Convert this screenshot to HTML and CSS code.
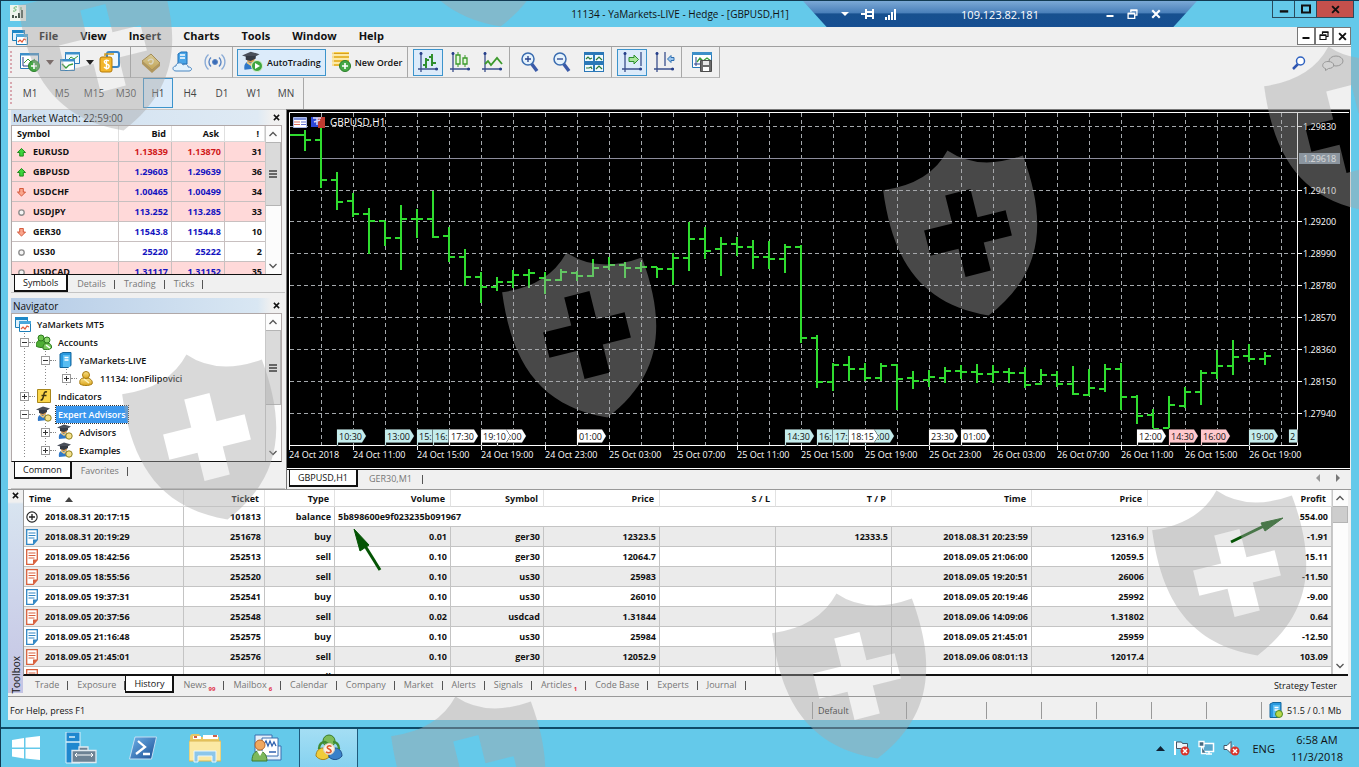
FILE: index.html
```html
<!DOCTYPE html>
<html lang="en">
<head>
  <meta charset="UTF-8">
  <title>11134 - YaMarkets-LIVE - Hedge - [GBPUSD,H1]</title>
  <link rel="stylesheet" href="styles.css">
</head>
<body>

  <!-- shared icons -->
  <svg class="defs" aria-hidden="true">
    <defs>
      <linearGradient id="gold" x1="0" y1="0" x2="0" y2="1"><stop offset="0" stop-color="#fbe38a"/><stop offset="1" stop-color="#d9a31a"/></linearGradient>
      <linearGradient id="ps" x1="0" y1="0" x2="1" y2="1"><stop offset="0" stop-color="#6fb2ea"/><stop offset="1" stop-color="#1a4f94"/></linearGradient>
    </defs>
    <symbol id="i-app" viewBox="0 0 16 16">
      <path d="M.5 1.500h12v10H.5z" fill="#dff1fb" stroke="#1e7fb8"/><path d="M0 1h13v3H0z" fill="#1e88c8"/>
      <path d="M4.500 5.500h11v10h-11z" fill="#fff" stroke="#1e7fb8"/><path d="M4 5h12v3H4z" fill="#4ba7dc"/>
      <path d="M6 13l2-2 2 2 2-3 2 1" fill="none" stroke="#e05a3a" stroke-width="1.200"/>
    </symbol>
    <symbol id="i-expert" viewBox="0 0 16 16">
      <path d="M2 15c-1-5 2-7 5-7s5 2 5 6z" fill="#2f78c8"/><circle cx="7" cy="6" r="3.200" fill="#d99a4e"/>
      <path d="M0 3.500L7 .5l7 2-6 3.500z" fill="#4a4f5a"/><path d="M3 4v3l4 1 4-2V4z" fill="#353a44"/>
      <path d="M4 9l3 2 2-2" fill="none" stroke="#f0c878" stroke-width="1.500"/>
      <circle cx="12" cy="12" r="3.200" fill="#f4e08a" stroke="#8f8020"/>
    </symbol>
    <symbol id="i-account" viewBox="0 0 16 16">
      <path d="M2 14c-1-4 1-6 4-6l4 0c3 1 5 3 4 6-3 2-9 2-12 0z" fill="url(#gold)" stroke="#a67a10"/>
      <circle cx="8" cy="5" r="3.500" fill="url(#gold)" stroke="#a67a10"/><path d="M6 9l5 4" stroke="#fff3b8" stroke-width="1.500"/>
    </symbol>
    <symbol id="i-people" viewBox="0 0 16 16">
      <path d="M0 12c0-4 2-6 5-6s5 3 5 6c-3 2-7 2-10 0z" fill="#4fae35" stroke="#2c7a1c"/><circle cx="5" cy="4" r="3" fill="#6cc44c" stroke="#2c7a1c"/>
      <path d="M7 15c0-4 1-6 4-6s5 2 4.500 5c-2 2-6 2-8.500 1z" fill="#79c95c" stroke="#2c7a1c"/><circle cx="11" cy="6" r="3" fill="#8bd66c" stroke="#2c7a1c"/>
      <path d="M10 11l4 3" stroke="#fff" stroke-width="1.500"/>
    </symbol>
    <symbol id="i-server" viewBox="0 0 16 16">
      <path d="M3 2l3-1.500h8v13l-3 2H3z" fill="#2a9ae0" stroke="#14679c"/><path d="M6 3h7v12H6z" fill="#58bdf2"/>
      <path d="M7.500 5.500h4M7.500 8h4" stroke="#fff" stroke-width="1.500"/>
    </symbol>
    <symbol id="i-indicator" viewBox="0 0 16 16">
      <path d="M1.500 1.500h13v13h-13z" fill="#fbd64a" stroke="#a8861a"/>
      <path d="M11 4c-3-1-3 2-3.500 4S7 12.500 4.500 12M5.500 7.500h5" fill="none" stroke="#3f3410" stroke-width="1.400"/>
    </symbol>
    <symbol id="i-up" viewBox="0 0 10 10"><path d="M5 .5l4.500 4.500H7v4H3V5H.5z" fill="#3dd43d" stroke="#148514"/></symbol>
    <symbol id="i-down" viewBox="0 0 10 10"><path d="M5 9L.5 4.500H3v-4h4v4h2.500z" fill="#f9a58c" stroke="#d0492a"/></symbol>
    <symbol id="i-flat" viewBox="0 0 10 10"><circle cx="5" cy="5" r="3" fill="#f4f4f4" stroke="#8c8c8c" stroke-width="1.500"/></symbol>
    <symbol id="i-note" viewBox="0 0 12 16">
      <path d="M.7 .7h10.600v10l-4 4.600H.7z" fill="#fff" stroke="currentColor" stroke-width="1.300"/>
      <path d="M2.500 4h7M2.500 6.500h7M2.500 9h6" stroke="currentColor"/><path d="M11 10.500L7 15v-4.500z" fill="currentColor"/>
    </symbol>
    <symbol id="i-plus" viewBox="0 0 14 14"><circle cx="7" cy="7" r="6" fill="#fff" stroke="#222" stroke-width="1.300"/><path d="M7 3.500v7M3.500 7h7" stroke="#222" stroke-width="1.500"/></symbol>
    <symbol id="i-chev-up" viewBox="0 0 10 8"><path d="M1.500 6L5 2.500 8.500 6" fill="none" stroke="#555" stroke-width="1.300"/></symbol>
    <symbol id="i-chev-down" viewBox="0 0 10 8"><path d="M1.500 2L5 5.500 8.500 2" fill="none" stroke="#555" stroke-width="1.300"/></symbol>
    <symbol id="i-close" viewBox="0 0 8 8"><path d="M1 1l6 6M7 1L1 7" stroke="currentColor" stroke-width="1.700"/></symbol>
    <symbol id="i-min" viewBox="0 0 10 8"><path d="M1.500 6h7" stroke="currentColor" stroke-width="2"/></symbol>
    <symbol id="i-restore" viewBox="0 0 10 10"><path d="M3.500 3V1h5.500v4.500H7.500M1 4h6v4.500H1z" fill="none" stroke="currentColor" stroke-width="1.200"/><path d="M1 4.300h6M3.300 1.300h6" stroke="currentColor" stroke-width="1.600"/></symbol>
    <symbol id="i-axes" viewBox="0 0 22 22"><path d="M4 1v20M1 18h20" stroke="#3a4f8c" stroke-width="1.300"/><circle cx="4" cy="2.500" r="1.500" fill="#27408b"/><circle cx="19.500" cy="18" r="1.500" fill="#27408b"/></symbol>
  </svg>

  <header class="titlebar">
    <svg class="title-icon" viewBox="0 0 16 16"><path d="M0 0h16v16H0z" fill="#eef5ee"/><path d="M3 13v-3M6 13v-2M9 13V8M12 13V5" stroke="#4a5a50" stroke-width="2"/><path d="M7 2c-3-1-4 2-2 2s1 3-2 2M11 2v3" fill="none" stroke="#5fae6a"/></svg>
    <h1 class="title-text">11134 - YaMarkets-LIVE - Hedge - [GBPUSD,H1]</h1>
    <div class="window-buttons">
      <button aria-label="Minimize"><svg width="12" height="10"><use href="#i-min"/></svg></button>
      <button aria-label="Maximize"><svg width="12" height="10"><path d="M2 1.500h8v7H2z" fill="none" stroke="#111" stroke-width="2"/></svg></button>
      <button class="close" aria-label="Close"><svg width="9" height="9"><use href="#i-close"/></svg></button>
    </div>
    <div class="remote-bar">
      <button aria-label="Options"><svg width="10" height="8"><path d="M1 2h8L5 6z" fill="#fff"/></svg></button>
      <button aria-label="Pin"><svg width="14" height="12"><path d="M0 6h5M5 1v10M5 4h6M5 8h6M12 1v10" stroke="#fff" stroke-width="2" fill="none"/></svg></button>
      <button aria-label="Connection"><svg width="14" height="14"><path d="M2 13v-3M5 13V8M8 13V5M11 13V2" stroke="#fff" stroke-width="2"/></svg></button>
      <span class="remote-host">109.123.82.181</span>
      <button aria-label="Minimize session"><svg width="10" height="8"><use href="#i-min"/></svg></button>
      <button aria-label="Restore session"><svg width="11" height="11"><use href="#i-restore"/></svg></button>
      <button aria-label="Close session"><svg width="10" height="10"><use href="#i-close"/></svg></button>
    </div>
  </header>

  <main class="window">
    <nav class="menu">
      <svg class="menu-icon" width="16" height="16"><use href="#i-app"/></svg>
      <button>File</button><button>View</button><button>Insert</button><button>Charts</button><button>Tools</button><button>Window</button><button>Help</button>
      <div class="mdi-buttons">
        <button aria-label="Minimize chart"><svg width="10" height="10"><use href="#i-min"/></svg></button>
        <button aria-label="Restore chart"><svg width="10" height="10"><use href="#i-restore"/></svg></button>
        <button aria-label="Close chart"><svg width="9" height="9"><use href="#i-close"/></svg></button>
      </div>
    </nav>

    <div class="toolbar">
      <div class="group first">
        <span class="grip"></span>
        <button class="tool" aria-label="New chart"><svg width="22" height="22"><path d="M1.500 2.500h18v15h-18z" fill="#fff" stroke="#2879b8"/><path d="M1 2h19v2.500H1z" fill="#3d8fc9"/><path d="M4 6v9h12" fill="none" stroke="#27408b"/><path d="M5 12l4-4 3 3 4-3" fill="none" stroke="#3a9b3a"/><circle cx="15" cy="15" r="5.500" fill="#45a845" stroke="#2a7f2a"/><path d="M15 12v6M12 15h6" stroke="#fff" stroke-width="1.600"/></svg></button>
        <button class="drop" aria-label="Chart list"><svg width="8" height="5"><path d="M0 0h8L4 5z" fill="#5a4440"/></svg></button>
        <button class="tool" aria-label="Profiles"><svg width="22" height="22"><path d="M6.500 1.500h14v11h-14z" fill="#eef8fd" stroke="#2879b8"/><path d="M6 1h15v2.500H6z" fill="#3d8fc9"/><path d="M8 10l4-4 3 2 4-3" fill="none" stroke="#3a9b3a"/><path d="M1.500 8.500h14v11h-14z" fill="#fff" stroke="#2879b8"/><path d="M1 8h15v2.500H1z" fill="#3d8fc9"/><path d="M3 13l4 4 3-3 4-1" fill="none" stroke="#3a9b3a" stroke-width="1.300"/></svg></button>
        <button class="drop" aria-label="Profile list"><svg width="8" height="5"><path d="M0 0h8L4 5z" fill="#222"/></svg></button>
        <button class="tool" aria-label="Symbols"><svg width="22" height="22"><rect x="8" y="1" width="12" height="15" rx="2" fill="#eef8ff" stroke="#3a86c8" stroke-width="2"/><rect x="1" y="6" width="12" height="15" rx="2" fill="#f3b62c" stroke="#b57a08"/><path d="M6 5V3h9" fill="none" stroke="#d09a20" stroke-width="1.500"/><path d="M10 10c-3-2-6 0-4 2s5 1 4 4-4 1-5 0M7.500 8.500v10" fill="none" stroke="#fff" stroke-width="1.400"/></svg></button>
      </div>
      <div class="group">
        <button class="tool" aria-label="Market"><svg width="22" height="22"><path d="M2 10l9-7 9 9-8 7z" fill="url(#gold)" stroke="#a0781c"/><path d="M2 10v3l10 9v-3zM12 19l8-7v3l-8 7z" fill="#b78a26"/><path d="M8 10c2-3 6-2 5 1s-3 2-4 1" fill="none" stroke="#fff6cf" stroke-width="1.500"/></svg></button>
        <button class="tool" aria-label="Cloud"><svg width="22" height="22"><path d="M6 3l3-2h6v12H6z" fill="#4aa6e8" stroke="#1e6fb5"/><path d="M8 4h5M8 7h5" stroke="#fff" stroke-width="1.300"/><path d="M4 20c-4 0-4-5 0-5 0-4 6-4 7-1 3-2 5 0 5 2 5 0 4 4 1 4z" fill="#e4f3fd" stroke="#4a86c0"/></svg></button>
        <button class="tool" aria-label="Signals"><svg width="22" height="22" fill="none" stroke="#5b86c4"><circle cx="11" cy="11" r="2.500" fill="#3a6cb8"/><path d="M7 6.500a6 6 0 0 0 0 9M15 6.500a6 6 0 0 1 0 9" stroke-width="1.400"/><path d="M4.500 3.500a10 10 0 0 0 0 15M17.500 3.500a10 10 0 0 1 0 15" stroke-width="1.400" stroke="#8aabd6"/></svg></button>
      </div>
      <div class="group">
        <button class="text-tool active"><svg width="22" height="22"><use href="#i-expert" width="20" height="20"/><circle cx="15" cy="15" r="5.500" fill="#3fa53f" stroke="#d9f0d0"/><path d="M13 12l5 3-5 3z" fill="#fff"/></svg>AutoTrading</button>
        <button class="text-tool"><svg width="22" height="22"><path d="M2 1h17v14H2z" fill="#f8cf4a"/><path d="M2 4h17M2 8h17M2 12h17" stroke="#fdf3c8" stroke-width="1.300"/><path d="M2 2.500h17M2 6h17M2 10h17M2 14h12" stroke="#d8a020"/><path d="M3 1v14" stroke="#fff" stroke-dasharray="2 2"/><circle cx="15" cy="15" r="5.500" fill="#45a845" stroke="#2a7f2a"/><path d="M15 12v6M12 15h6" stroke="#fff" stroke-width="1.600"/></svg>New Order</button>
      </div>
      <div class="group">
        <button class="tool active" aria-label="Bar chart"><svg width="22" height="22"><use href="#i-axes"/><path d="M9 7v10M6 14h3M9 9h3M15 3v12M12 6h3M15 12h4" stroke="#2f8f2f" stroke-width="2"/></svg></button>
        <button class="tool" aria-label="Candlesticks"><svg width="22" height="22"><use href="#i-axes"/><path d="M9 1v3M9 13v3M16 4v3M16 13v3" stroke="#3c9a2c"/><path d="M7 4h4v9H7zM14 7h4v6h-4z" fill="#e4f8dc" stroke="#3c9a2c" stroke-width="1.300"/></svg></button>
        <button class="tool" aria-label="Line chart"><svg width="22" height="22"><use href="#i-axes"/><path d="M4 13l3-3 3 4 6-7 5 6" fill="none" stroke="#3c9a2c" stroke-width="1.800"/></svg></button>
      </div>
      <div class="group">
        <button class="tool" aria-label="Zoom in"><svg width="22" height="22"><path d="M12 12l6 8" stroke="#3a5aa8" stroke-width="3.500"/><circle cx="9" cy="8" r="6" fill="#e6f3fc" stroke="#3a6cb0" stroke-width="1.500"/><path d="M9 5v6M6 8h6" stroke="#27408b" stroke-width="1.300"/></svg></button>
        <button class="tool" aria-label="Zoom out"><svg width="22" height="22"><path d="M12 12l6 8" stroke="#3a5aa8" stroke-width="3.500"/><circle cx="9" cy="8" r="6" fill="#e6f3fc" stroke="#3a6cb0" stroke-width="1.500"/><path d="M6 8h6" stroke="#27408b" stroke-width="1.300"/></svg></button>
        <button class="tool" aria-label="Tile windows"><svg width="22" height="22"><path d="M1 1h20v20H1z" fill="#2b78b8"/><path d="M2 4h8v6H2zM12 4h8v6h-8zM2 14h8v6H2zM12 14h8v6h-8z" fill="#f2fafe"/><path d="M3 8l2-2 2 2 2-1M13 9l3-3 3 3M3 17h3l2-1 1 2M13 18l3-3 3 3" fill="none" stroke="#2c7c3c" stroke-width="1.200"/></svg></button>
      </div>
      <div class="group">
        <button class="tool active" aria-label="Auto scroll"><svg width="22" height="22"><use href="#i-axes"/><path d="M20 1v14" stroke="#3a4f8c" stroke-width="1.300"/><path d="M8 6.500h5V4l4.500 4.500L13 13v-2.500H8z" fill="#a8e69a" stroke="#2f8f2f"/></svg></button>
        <button class="tool" aria-label="Chart shift"><svg width="22" height="22"><use href="#i-axes"/><path d="M12 1v14" stroke="#3a4f8c" stroke-width="1.300"/><path d="M21 6.500h-3V4.500L14.500 8l3.500 3.500V9.500h3z" fill="#9cc6ee" stroke="#2f6fb0"/></svg></button>
      </div>
      <div class="group">
        <button class="tool" aria-label="Templates"><svg width="22" height="22"><path d="M1.500 1.500h19v15h-19z" fill="#fff" stroke="#2879b8"/><path d="M1 1h20v3H1z" fill="#3d8fc9"/><path d="M5 6v9M3 13h8" stroke="#27408b"/><path d="M6 11l3-4 3 3 4-3 4 3" fill="none" stroke="#3a9b3a" stroke-width="1.300"/><path d="M9.500 9.500h11v11h-11z" fill="#6c6c6c" stroke="#4c4c4c"/><path d="M12 10h6v4h-6z" fill="#e8e8e8"/><path d="M12 16h6v4h-6z" fill="#fff"/></svg></button>
      </div>
      <div class="toolbar-right">
        <button aria-label="Search"><svg width="14" height="14"><path d="M6 8l-5 5" stroke="#2f55b0" stroke-width="2.500"/><circle cx="8.500" cy="5" r="4" fill="#fff" stroke="#2f62c0" stroke-width="1.500"/></svg></button>
        <button aria-label="Chat"><svg width="22" height="16"><ellipse cx="14" cy="6" rx="7" ry="5" fill="#ececec" stroke="#8c8c8c"/><path d="M6 6.500c-6 0-7 6-2.500 7v2l3-2c7 0 7-7-.5-7z" fill="#f4f4f4" stroke="#8c8c8c"/></svg></button>
      </div>
    </div>

    <div class="timeframes">
      <div class="group first">
        <span class="grip"></span>
        <button>M1</button><button>M5</button><button>M15</button><button>M30</button><button class="active">H1</button><button>H4</button><button>D1</button><button>W1</button><button>MN</button>
      </div>
    </div>

    <div class="workspace">
      <aside class="dock">
        <section class="panel market">
          <h2>Market Watch: 22:59:00<button aria-label="Close Market Watch"><svg width="7" height="7"><use href="#i-close" /></svg></button></h2>
          <div class="box">
            <table class="quotes">
              <colgroup><col><col class="c-price"><col class="c-price"><col class="c-spread"></colgroup>
              <thead><tr><th>Symbol</th><th>Bid</th><th>Ask</th><th>!</th></tr></thead>
              <tbody>
                <tr class="hot fall"><td><svg><use href="#i-up"/></svg>EURUSD</td><td>1.13839</td><td>1.13870</td><td>31</td></tr>
                <tr class="hot"><td><svg><use href="#i-up"/></svg>GBPUSD</td><td>1.29603</td><td>1.29639</td><td>36</td></tr>
                <tr class="hot"><td><svg><use href="#i-down"/></svg>USDCHF</td><td>1.00465</td><td>1.00499</td><td>34</td></tr>
                <tr class="hot"><td><svg><use href="#i-flat"/></svg>USDJPY</td><td>113.252</td><td>113.285</td><td>33</td></tr>
                <tr><td><svg><use href="#i-down"/></svg>GER30</td><td>11543.8</td><td>11544.8</td><td>10</td></tr>
                <tr><td><svg><use href="#i-flat"/></svg>US30</td><td>25220</td><td>25222</td><td>2</td></tr>
                <tr class="hot"><td><svg><use href="#i-flat"/></svg>USDCAD</td><td>1.31117</td><td>1.31152</td><td>35</td></tr>
              </tbody>
            </table>
            <div class="scroll"><svg><use href="#i-chev-up"/></svg><span class="thumb short"></span><svg><use href="#i-chev-down"/></svg></div>
          </div>
          <div class="tabs"><button class="active">Symbols</button><button>Details</button><button>Trading</button><button>Ticks</button></div>
        </section>

        <section class="panel navigator">
          <h2>Navigator<button aria-label="Close Navigator"><svg width="7" height="7"><use href="#i-close"/></svg></button></h2>
          <div class="box">
            <div class="tree">
              <div class="node"><svg><use href="#i-app"/></svg>YaMarkets MT5</div>
              <ul>
                <li><div class="node"><button class="toggle minus" aria-label="Collapse"></button><svg><use href="#i-people"/></svg>Accounts</div>
                  <ul>
                    <li><div class="node"><button class="toggle minus" aria-label="Collapse"></button><svg><use href="#i-server"/></svg>YaMarkets-LIVE</div>
                      <ul>
                        <li><div class="node"><button class="toggle" aria-label="Expand"></button><svg><use href="#i-account"/></svg>11134: IonFilipovici</div></li>
                      </ul>
                    </li>
                  </ul>
                </li>
                <li><div class="node"><button class="toggle" aria-label="Expand"></button><svg><use href="#i-indicator"/></svg>Indicators</div></li>
                <li><div class="node"><button class="toggle minus" aria-label="Collapse"></button><svg><use href="#i-expert"/></svg><span class="selected">Expert Advisors</span></div>
                  <ul>
                    <li><div class="node"><button class="toggle" aria-label="Expand"></button><svg><use href="#i-expert"/></svg>Advisors</div></li>
                    <li><div class="node"><button class="toggle" aria-label="Expand"></button><svg><use href="#i-expert"/></svg>Examples</div></li>
                  </ul>
                </li>
              </ul>
            </div>
            <div class="scroll"><svg><use href="#i-chev-up"/></svg><span class="thumb mid"></span><svg><use href="#i-chev-down"/></svg></div>
          </div>
          <div class="tabs"><button class="active">Common</button><button>Favorites</button></div>
        </section>
      </aside>

      <section class="chart-area">
        <svg class="chart" viewBox="287 110 1063 357" preserveAspectRatio="xMinYMin meet">
          <g id="grid"></g>
          <path d="M290 158.500H1297" stroke="#8c8c9c"/>
          <g id="bars"></g>
          <path d="M289.500 445V112.500H1349" fill="none" stroke="#fff"/>
          <path d="M289 445.500h1008.500V113" fill="none" stroke="#fff"/>
          <g id="scale"></g>
          <g id="tags"></g>
          <rect x="1299" y="153" width="41" height="11" fill="#778899"/>
          <text class="price" x="1303" y="162">1.29618</text>
          <path d="M293.500 117.500h13v10h-13z" fill="#fff" stroke="#a9b8e8"/><path d="M294 118h12v2h-12z" fill="#7d90d8"/><path d="M294 122h6M294 124.500h6" stroke="#e07060"/><path d="M301 122h5M301 124.500h5" stroke="#6070d0"/>
          <path d="M311 117h7v10h-7z" fill="#2c48d8"/><path d="M318 117h7v11h-7z" fill="#c03a30"/><path d="M313 118h8M317 118v7M314 122l6-2" stroke="#d8d8f4" stroke-width="1.500"/>
          <text class="symbol" x="330" y="126">GBPUSD,H1</text>
        </svg>
        <div class="chart-tabs tabs">
          <button class="active">GBPUSD,H1</button><button>GER30,M1</button>
          <div class="tab-scroll"><button aria-label="Previous"><svg width="5" height="8"><path d="M5 0v8L1 4z" fill="#999"/></svg></button><button aria-label="Next"><svg width="5" height="8"><path d="M0 0v8l4-4z" fill="#777"/></svg></button></div>
        </div>
      </section>
    </div>

    <section class="toolbox">
      <div class="toolbox-side"><button aria-label="Close Toolbox"><svg width="7" height="7"><use href="#i-close"/></svg></button><span>Toolbox</span></div>
      <div class="toolbox-main">
        <div class="history-box">
          <table class="history">
            <colgroup><col class="h-time"><col class="h-ticket"><col class="h-type"><col class="h-wide"><col class="h-symbol"><col class="h-wide"><col class="h-wide"><col class="h-wide"><col class="h-close"><col class="h-wide"><col></colgroup>
            <thead><tr><th>Time<svg class="sort" width="8" height="5"><path d="M0 5h8L4 0z" fill="#444"/></svg></th><th>Ticket</th><th>Type</th><th>Volume</th><th>Symbol</th><th>Price</th><th>S / L</th><th>T / P</th><th>Time</th><th>Price</th><th>Profit</th></tr></thead>
            <tbody>
              <tr class="balance"><td><svg><use href="#i-plus"/></svg>2018.08.31 20:17:15</td><td>101813</td><td>balance</td><td colspan="7" class="comment">5b898600e9f023235b091967</td><td>554.00</td></tr>
              <tr><td><svg class="buy"><use href="#i-note"/></svg>2018.08.31 20:19:29</td><td>251678</td><td>buy</td><td>0.01</td><td>ger30</td><td>12323.5</td><td></td><td>12333.5</td><td>2018.08.31 20:23:59</td><td>12316.9</td><td>-1.91</td></tr>
              <tr><td><svg class="sell"><use href="#i-note"/></svg>2018.09.05 18:42:56</td><td>252513</td><td>sell</td><td>0.10</td><td>ger30</td><td>12064.7</td><td></td><td></td><td>2018.09.05 21:06:00</td><td>12059.5</td><td>15.11</td></tr>
              <tr><td><svg class="sell"><use href="#i-note"/></svg>2018.09.05 18:55:56</td><td>252520</td><td>sell</td><td>0.10</td><td>us30</td><td>25983</td><td></td><td></td><td>2018.09.05 19:20:51</td><td>26006</td><td>-11.50</td></tr>
              <tr><td><svg class="buy"><use href="#i-note"/></svg>2018.09.05 19:37:31</td><td>252541</td><td>buy</td><td>0.10</td><td>us30</td><td>26010</td><td></td><td></td><td>2018.09.05 20:19:46</td><td>25992</td><td>-9.00</td></tr>
              <tr><td><svg class="sell"><use href="#i-note"/></svg>2018.09.05 20:37:56</td><td>252548</td><td>sell</td><td>0.02</td><td>usdcad</td><td>1.31844</td><td></td><td></td><td>2018.09.06 14:09:06</td><td>1.31802</td><td>0.64</td></tr>
              <tr><td><svg class="buy"><use href="#i-note"/></svg>2018.09.05 21:16:48</td><td>252575</td><td>buy</td><td>0.10</td><td>us30</td><td>25984</td><td></td><td></td><td>2018.09.05 21:45:01</td><td>25959</td><td>-12.50</td></tr>
              <tr><td><svg class="sell"><use href="#i-note"/></svg>2018.09.05 21:45:01</td><td>252576</td><td>sell</td><td>0.10</td><td>ger30</td><td>12052.9</td><td></td><td></td><td>2018.09.06 08:01:13</td><td>12017.4</td><td>103.09</td></tr>
              <tr><td><svg class="sell"><use href="#i-note"/></svg>2018.09.05 21:52:06</td><td>252579</td><td>sell</td><td>0.10</td><td>us30</td><td>25953</td><td></td><td></td><td>2018.09.05 21:58:01</td><td>25969</td><td>-8.00</td></tr>
            </tbody>
          </table>
          <div class="scroll"><svg><use href="#i-chev-up"/></svg><span class="thumb tiny"></span><svg><use href="#i-chev-down"/></svg></div>
        </div>
        <div class="tabs toolbox-tabs">
          <button>Trade</button><button>Exposure</button><button class="active">History</button><button>News<sub>99</sub></button><button>Mailbox<sub>6</sub></button><button>Calendar</button><button>Company</button><button>Market</button><button>Alerts</button><button>Signals</button><button>Articles<sub>1</sub></button><button>Code Base</button><button>Experts</button><button>Journal</button>
          <a href="#" class="tester">Strategy Tester</a>
        </div>
      </div>
    </section>

    <footer class="status">
      <span class="help">For Help, press F1</span>
      <span class="cell profile">Default</span>
      <span class="cell wide"></span><span class="cell"></span><span class="cell"></span><span class="cell"></span><span class="cell"></span><span class="cell"></span>
      <span class="cell traffic"><svg width="16" height="16"><use href="#i-server"/><circle cx="12" cy="12" r="3.500" fill="#b8d84a" stroke="#4f8a20"/></svg>51.5 / 0.1 Mb</span>
    </footer>
  </main>

  <footer class="taskbar">
    <button class="start" aria-label="Start"><svg width="28" height="24"><path d="M0 4l12-2v9.500H0zM13.500 1.800L28 0v11.500H13.500zM0 13h12v9.500L0 20.500zM13.500 13H28v11l-14.500-1.500z" fill="#fff"/></svg></button>
    <button aria-label="Server Manager"><svg width="32" height="32"><path d="M1 0h14v31H1z" fill="#1f87cf" stroke="#d8effa"/><path d="M1 10h14M4 5h6" stroke="#d8effa" stroke-width="1.500"/><path d="M7 18.500h24v12H7zM14 18v-3h9v3" fill="#6d8294" stroke="#e2eaf0" stroke-width="1.300"/><path d="M10 23h18M12 21l-2 2 2 2M26 21l2 2-2 2" fill="none" stroke="#fff"/></svg></button>
    <button aria-label="PowerShell"><svg width="28" height="24"><path d="M6 1h21.500l-5 22H.5z" fill="url(#ps)" stroke="#c5def2"/><path d="M9 5l7 6-9 7M14 18h7" fill="none" stroke="#fff" stroke-width="2.300"/></svg></button>
    <button aria-label="File Explorer"><svg width="32" height="30"><path d="M1 4c0-2 1-3 3-3h6l2 3h18v24H1z" fill="#e9c765"/><path d="M14 2h15v4H14zM4 3h8v3H4z" fill="#fff"/><path d="M24 3h4M5 4h3" stroke="#d06048" stroke-width="2"/><path d="M0 8h32v20H0z" fill="#fbe9a4" stroke="#dcb850"/><path d="M5 18h22v11h-4v-6H9v6H5z" fill="#8cc6ea" stroke="#e8f6fd"/></svg></button>
    <button aria-label="Management"><svg width="32" height="30"><path d="M4 2h17v17H4z" fill="#e6f0fa" stroke="#3a6fb0"/><path d="M23 13h7v14H12v-6" fill="#e6f0fa" stroke="#3a6fb0"/><path d="M11 5h16v18H11z" fill="#fff" stroke="#3a6fb0"/><path d="M13 11l2-3 2 5 2-5 2 5 2-4 2 4M18 19h7" fill="none" stroke="#2f62b0" stroke-width="1.300"/><path d="M1 28c0-7 3-10 7-10s8 3 8 10z" fill="#7cb85c" stroke="#3f7c2c"/><path d="M6 18l3 5 3-5z" fill="#fff"/><circle cx="9" cy="12" r="5" fill="#f0a860" stroke="#b8682c"/></svg></button>
    <button class="active" aria-label="MetaTrader 5"><svg width="30" height="28"><circle cx="15" cy="7" r="6" fill="#7cbc58" stroke="#3a7a28"/><path d="M2 22c0-5 3-8 7-8s7 4 6 9c-4 4-10 3-13-1z" fill="#f0cc3a" stroke="#a8821a"/><path d="M28 22c0-5-3-8-7-8s-7 4-6 9c4 4 10 3 13-1z" fill="#3a80c8" stroke="#1f4f8c"/><path d="M5 15c0-5 3-7 6-7l6 4M25 15c0-5-3-7-6-7" stroke="#3f8c34" stroke-width="2.500" fill="none"/><circle cx="15" cy="15" r="5.500" fill="#fff2e4" stroke="#d8d0c0"/><path d="M17.500 12.500c-3-2-6 1-3 2.300s4 3.500 0 4c-1 0-2-.5-2.500-1" fill="none" stroke="#e0582c" stroke-width="1.500"/></svg></button>
    <div class="tray">
      <svg width="9" height="5"><path d="M0 5h9L4.500 0z" fill="#123"/></svg>
      <svg width="17" height="16"><path d="M2 1v14" stroke="#fff" stroke-width="2"/><path d="M3.500 2h5l1 1.500h5V10h-5l-1-1.500h-5z" fill="#e8f4fa" stroke="#456"/><circle cx="12" cy="11" r="4.500" fill="#d8352c"/><path d="M10 9l4 4M14 9l-4 4" stroke="#fff" stroke-width="1.500"/></svg>
      <svg width="17" height="16"><path d="M5 3.500h10.500v8H5zM8 14h6M11 12v2" fill="#5aa8cc" stroke="#fff" stroke-width="1.500"/><path d="M1 1.500h5v5H1zM3.500 7v6.500H8" fill="#456a80" stroke="#fff" stroke-width="1.300"/></svg>
      <svg width="17" height="16"><path d="M1 5.500h3l4-4v12l-4-4H1z" fill="#fff" stroke="#456"/><path d="M10 5c1.500 1.500 1.500 4 0 6" fill="none" stroke="#fff"/><circle cx="12" cy="11" r="4.500" fill="#d8352c"/><path d="M10 9l4 4M14 9l-4 4" stroke="#fff" stroke-width="1.500"/></svg>
      <span class="lang">ENG</span>
      <time class="clock">6:58 AM<br>11/3/2018</time>
    </div>
  </footer>

  <svg class="overlay" aria-hidden="true">
    <defs>
      <path id="shield" fill-rule="evenodd" d="M0-85Q-25-57-72-62C-80 10-62 58 0 85 62 58 80 10 72-62Q25-57 0-85zM-13-42H13V-13H42V13H13V42H-13V13H-42V-13H-13z"/>
    </defs>
    <g fill="#045404" stroke="#045404">
      <path d="M380 570l-18-29" stroke-width="3"/><path d="M354 529l15 16-9 6z"/>
      <path d="M1231 542l35-17" stroke-width="3"/><path d="M1283 518l-18 13-4-8z"/>
    </g>
    <g fill="#a8a8a8" fill-opacity=".430">
      <use href="#shield" transform="translate(103 48) rotate(-14)"/>
      <use href="#shield" transform="translate(480 -56) rotate(-14)"/>
      <use href="#shield" transform="translate(1349 129) rotate(-14)"/>
      <use href="#shield" transform="translate(587 335) rotate(-14)"/>
      <use href="#shield" transform="translate(968 233) rotate(-14)"/>
      <use href="#shield" transform="translate(207 437) rotate(-14)"/>
      <use href="#shield" transform="translate(1237 573) rotate(-14)"/>
      <use href="#shield" transform="translate(857 676) rotate(-14)"/>
      <use href="#shield" transform="translate(476 779) rotate(-14)"/>
    </g>
  </svg>

  <script>
    // high, low, open, close - one bar every 16px
    const bars = [
      [130,151,135,140],[128,188,140,180],[172,210,180,202],[193,217,201,214],[208,254,214,221],
      [221,246,221,238],[205,270,238,219],[209,238,219,219],[191,238,219,237],[227,262,236,257],
      [249,286,257,277],[272,303,277,287],[277,291,287,282],[270,288,282,275],[269,288,275,273],
      [272,294,278,280],[269,281,280,272],[271,281,273,276],[259,277,276,268],[257,270,267,265],
      [262,278,265,268],[262,272,268,267],[267,278,267,269],[253,285,269,258],[222,271,258,239],
      [227,259,239,251],[237,276,249,244],[237,256,244,247],[240,269,247,257],[241,269,257,259],
      [244,273,259,247],[245,343,247,338],[335,388,338,382],[363,391,382,365],[356,381,365,369],
      [363,381,369,378],[363,381,378,366],[364,410,365,379],[371,389,378,381],[370,387,380,377],
      [367,383,378,371],[365,379,371,372],[364,383,372,374],[365,383,374,372],[368,383,372,373],
      [367,388,373,385],[369,385,384,375],[371,387,375,384],[366,395,384,394],[369,396,395,388],
      [364,392,389,369],[363,410,369,397],[395,424,397,416],[409,428,415,429],[396,428,428,405],
      [387,408,406,392],[370,405,392,373],[350,379,373,366],[340,375,366,357],[344,362,356,359],
      [352,365,359,356]
    ];
    const prices = [["1.29830",126],["1.29410",190],["1.29200",221],["1.28990",253],["1.28780",285],["1.28570",317],["1.28360",349],["1.28150",381],["1.27940",413]];
    const times = ["24 Oct 2018","24 Oct 11:00","24 Oct 15:00","24 Oct 19:00","24 Oct 23:00","25 Oct 03:00","25 Oct 07:00","25 Oct 11:00","25 Oct 15:00","25 Oct 19:00","25 Oct 23:00","26 Oct 03:00","26 Oct 07:00","26 Oct 11:00","26 Oct 15:00","26 Oct 19:00"];
    // x, text, colour, text inset
    const tags = [
      [337,"10:30","aqua"],[385,"13:00","aqua"],[417,"15:","aqua"],[433,"16:","aqua"],[449,"17:30","plain"],
      [497,":00","plain",12],[481,"19:10","plain"],[577,"01:00","plain"],[785,"14:30","aqua"],[817,"16:","aqua"],
      [833,"17:","aqua"],[865,":00","aqua",12],[849,"18:15","plain"],[929,"23:30","plain"],[961,"01:00","plain"],
      [1137,"12:00","plain"],[1169,"14:30","pink"],[1201,"16:00","pink"],[1249,"19:00","aqua"]
    ];

    let grid = "";
    for (let x = 321; x < 1297; x += 32) grid += `<path d="M${x}.500 113V445"/>`;
    prices.forEach(p => grid += `<path d="M290 ${p[1]}.500H1297"/>`);
    document.getElementById("grid").innerHTML = grid;

    document.getElementById("bars").innerHTML = bars.map((b, i) => {
      const x = 305 + i * 16;
      return `<path d="M${x} ${b[0]}V${b[1]}M${x - 6} ${b[2]}H${x}M${x} ${b[3]}h6"/>`;
    }).join("") + `<path d="M290 135h9"/>`;

    let scale = "";
    prices.forEach(p => scale += `<path d="M1297 ${p[1]}.500h5"/><text class="price" x="1303" y="${p[1] + 4}">${p[0]}</text>`);
    times.forEach((t, i) => scale += `<path d="M${289 + i * 64}.500 445v5"/><text class="time" x="${289 + i * 64}" y="458">${t}</text>`);
    document.getElementById("scale").innerHTML = scale;

    document.getElementById("tags").innerHTML = tags.map(t =>
      `<path class="${t[2]}" d="M${t[0]} 429.500h25l4 6.500-4 6.500h-24v3h-1z"/><text x="${t[0] + (t[3] || 2)}" y="440">${t[1]}</text>`
    ).join("") + `<path class="aqua" d="M1289 429.500h8v13h-8z"/><text x="1290" y="440">2</text>`;
  </script>

</body>
</html>
```
FILE: styles.css
```css
* {
  box-sizing: border-box;
}
body {
  margin: 0;
  min-height: 100vh;
  display: flex;
  flex-direction: column;
  font-family: "Open Sans", "Noto Sans", sans-serif;
  font-size: 9px;
  color: #111;
  background: #64c9ea;
  border-top: 1px solid #123a52;
  border-left: 1px solid #123a52;
  position: relative;
  overflow-x: hidden;
}
button {
  font: inherit;
  color: inherit;
  background: none;
  border: none;
  padding: 0;
  margin: 0;
  display: flex;
  align-items: center;
  justify-content: center;
}
svg {
  display: block;
  flex: none;
}
.defs {
  position: absolute;
  width: 0;
  height: 0;
}

/* title bar */
.titlebar {
  height: 26px;
  display: flex;
  align-items: center;
  justify-content: center;
  position: relative;
}
.title-icon {
  position: absolute;
  left: 9px;
  top: 4px;
  width: 16px;
  height: 16px;
}
.title-text {
  margin: 0;
  font-size: 10px;
  font-weight: normal;
}
.window-buttons {
  position: absolute;
  right: 5px;
  top: 0;
  display: flex;
  border: 1px solid #2a4a5c;
  border-top: none;
}
.window-buttons button {
  width: 22px;
  height: 16px;
  border-right: 1px solid #2a4a5c;
}
.window-buttons .close {
  width: 36px;
  background: #c4504c;
  border-right: none;
}
.remote-bar {
  position: absolute;
  left: 802px;
  top: 0;
  width: 394px;
  height: 26px;
  padding: 0 30px;
  display: flex;
  align-items: center;
  color: #fff;
  background: linear-gradient(#7ba9d6, #4a80ba 45%, #17508f 50%, #164f92);
  clip-path: polygon(0 0, 100% 0, 94% 100%, 6% 100%);
}
.remote-bar button {
  width: 23px;
}
.remote-host {
  flex: 1;
  text-align: center;
  font-size: 11px;
}

/* main window */
.window {
  flex: 1;
  display: flex;
  flex-direction: column;
  margin: 0 8px 0 7px;
  background: #f0f0f0;
}
.menu {
  height: 20px;
  display: flex;
  align-items: stretch;
  border-bottom: 1px solid #a0a0a0;
  font-size: 11px;
  font-weight: bold;
}
.menu > button {
  padding: 0 11px 2px;
}
.menu-icon {
  margin: 2px 0 0 4px;
}
.mdi-buttons {
  margin-left: auto;
  display: flex;
  align-items: flex-start;
}
.mdi-buttons button {
  width: 18px;
  height: 18px;
  background: #fff;
  border: 1px solid #777;
}
.toolbar {
  height: 31px;
  display: flex;
}
.group {
  display: flex;
  align-items: center;
  padding: 0 1px 0 4px;
  border-right: 1px solid #a8a8a8;
  border-bottom: 1px solid #b8b8b8;
}
.group.first {
  padding: 0 4px 0 0;
}
.grip {
  width: 6px;
  align-self: stretch;
  margin: 3px 0;
  background: radial-gradient(circle at 3px 2px, #d8a8b0 1px, transparent 1px) 0 0 / 6px 4px;
}
.tool {
  width: 30px;
  height: 27px;
  margin: 0 1px;
}
.drop {
  width: 8px;
}
.tool.active,
.text-tool.active,
.timeframes .active {
  background: #dcebfa;
  border: 1px solid #3c94cc;
}
.text-tool {
  height: 27px;
  padding: 0 4px;
  gap: 3px;
  font-weight: 600;
}
.toolbar-right {
  margin-left: auto;
  display: flex;
  align-items: center;
  gap: 16px;
  padding-right: 7px;
}
.timeframes {
  height: 31px;
  display: flex;
}
.timeframes .group {
  align-items: flex-start;
  font-size: 10px;
  color: #444;
  padding-right: 1px;
  border-bottom: none;
}
.timeframes button {
  width: 30px;
  height: 30px;
  margin: 0 1px;
}

/* docked panels */
.workspace {
  flex: 1;
  display: flex;
  min-height: 379px;
}
.dock {
  width: 278px;
  display: flex;
  flex-direction: column;
  padding: 0 1px 0 3px;
  border-top: 1px solid #c8c8c8;
}
.panel {
  display: flex;
  flex-direction: column;
  border-bottom: 1px solid #c4c4c4;
}
.panel h2 {
  margin: 0;
  height: 15px;
  display: flex;
  align-items: center;
  justify-content: space-between;
  padding: 0 5px 0 2px;
  font-size: 10px;
  font-weight: normal;
  background: linear-gradient(90deg, #b4cbe6, #d9e7f3 90%, #f0f0f0 95%);
}
.market {
  margin-bottom: 5px;
}
.market h2 {
  background: linear-gradient(90deg, #cfe0f0, #dfeaf4 90%, #f0f0f0 95%);
}
.navigator {
  flex: 1;
}
.box {
  display: flex;
  align-items: flex-start;
  height: 149px;
  margin-right: 3px;
  overflow: hidden;
  background: #fff;
  border: 1px solid #b0a8a8;
  border-bottom: 1px solid #111;
}
.market .box {
  height: 150px;
}
table {
  border-collapse: separate;
  border-spacing: 0;
  table-layout: fixed;
  font-weight: bold;
}
.quotes {
  flex: 1;
  width: 100%;
  min-width: 0;
}
.c-price {
  width: 53px;
}
.c-spread {
  width: 40px;
}
.quotes th {
  height: 16px;
  padding: 0 5px;
  text-align: right;
  border-right: 1px solid #e0e0e0;
  border-bottom: 1px solid #d8d8d8;
}
.quotes th:first-child {
  text-align: left;
}
.quotes td {
  height: 20px;
  padding: 0 3px;
  text-align: right;
  color: #1414c0;
  border-right: 1px solid #c8c0c0;
  border-bottom: 1px solid #c8c0c0;
}
.quotes td:first-child,
.quotes td:last-child {
  color: #111;
}
.quotes td:first-child {
  text-align: left;
}
.quotes td:last-child {
  border-right: none;
}
.quotes .hot td {
  background: #ffd9d9;
}
.quotes .fall td:nth-child(2),
.quotes .fall td:nth-child(3) {
  color: #d01818;
}
.quotes svg {
  display: inline-block;
  width: 9px;
  height: 9px;
  margin: 0 7px 0 2px;
  vertical-align: middle;
}
.scroll {
  width: 16px;
  align-self: stretch;
  display: flex;
  flex-direction: column;
  border-left: 1px solid #c8c8c8;
  background: #fcfcfc;
}
.scroll svg {
  width: 10px;
  height: 8px;
  margin: 4px 2px;
}
.scroll svg:last-child {
  margin-top: auto;
}
.thumb {
  background: #dadada;
  border: 1px solid #b4b4b4;
  border-left: none;
  display: flex;
  align-items: center;
  justify-content: center;
}
.thumb.short {
  height: 64px;
}
.thumb.mid {
  height: 75px;
}
.thumb.tiny {
  height: 17px;
  background: #cdcdcd;
}
.thumb.short::before,
.thumb.mid::before {
  content: "";
  width: 8px;
  height: 8px;
  background: repeating-linear-gradient(#666 0 2px, transparent 2px 3px);
}
.tabs {
  display: flex;
  align-items: flex-start;
  color: #777;
}
.tabs > button {
  height: 17px;
  padding: 0 9px;
  position: relative;
}
.tabs > button::after {
  content: "";
  position: absolute;
  right: 0;
  top: 5px;
  height: 9px;
  border-right: 1px solid #555;
}
.tabs > .active {
  padding: 0 8px;
  color: #111;
  background: #fff;
  border: 2px solid #111;
  border-width: 0 2px 2px 1px;
}
.tabs > .active::after {
  display: none;
}
.panel .tabs {
  padding-left: 3px;
}

/* navigator tree */
.tree {
  flex: 1;
  font-weight: 600;
  padding-top: 1px;
}
.tree ul {
  list-style: none;
  margin: 0;
  padding: 0 0 0 21px;
  background: repeating-linear-gradient(#888 0 1px, transparent 1px 3px) 25px 0 / 1px 100% no-repeat;
}
.tree > ul {
  padding-left: 8px;
  background-position: 12px 0;
}
.node {
  height: 18px;
  display: flex;
  align-items: center;
  gap: 6px;
  padding-left: 3px;
  white-space: nowrap;
}
.tree ul .node {
  padding-left: 0;
}
.node svg {
  width: 16px;
  height: 16px;
}
.toggle {
  width: 9px;
  height: 9px;
  border: 1px solid #999;
  background: linear-gradient(#333, #333) center / 5px 1px no-repeat, linear-gradient(#333, #333) center / 1px 5px no-repeat #fff;
  position: relative;
}
.toggle.minus {
  background: linear-gradient(#333, #333) center / 5px 1px no-repeat #fff;
}
.toggle::after {
  content: "";
  position: absolute;
  left: 8px;
  top: 3px;
  width: 6px;
  border-top: 1px dotted #888;
}
.toggle + svg {
  margin-left: 1px;
}
.selected {
  margin-left: -2px;
  padding: 2px 2px;
  color: #fff;
  background: #3a97ee;
  outline: 1px dotted #333;
}

/* chart */
.chart-area {
  flex: 1;
  min-width: 0;
  display: flex;
  flex-direction: column;
  margin-right: 1px;
  border-top: 1px solid #777;
  border-left: 1px solid #777;
}
.chart {
  flex: 1;
  width: 100%;
  min-height: 0;
  background: #000;
}
#grid {
  stroke: #a4a8ac;
  stroke-dasharray: 4 3;
}
#bars {
  stroke: #2fdc2f;
  stroke-width: 2;
  fill: none;
}
#scale {
  stroke: #fff;
}
.chart text {
  fill: #fff;
  stroke: none;
  font-size: 9px;
}
.chart .symbol {
  font-size: 10px;
}
#tags text {
  fill: #111;
}
.aqua {
  fill: #c4ecec;
}
.plain {
  fill: #fff;
}
.pink {
  fill: #ffc8cc;
}
#tags path {
  stroke: #222;
  stroke-width: 1;
  paint-order: stroke;
}
.chart-tabs {
  height: 20px;
  padding-left: 2px;
  border-top: 1px solid #111;
  box-shadow: 0 -1px #fff;
}
.chart-tabs > button {
  padding: 0 11px;
}
.tab-scroll {
  margin: 4px 9px 0 auto;
  display: flex;
  gap: 16px;
}

/* toolbox */
.toolbox {
  height: 208px;
  display: flex;
  border-top: 1px solid #999;
  border-bottom: 1px solid #999;
}
.toolbox-side {
  width: 15px;
  margin-bottom: 3px;
  display: flex;
  flex-direction: column;
  justify-content: space-between;
  align-items: center;
  background: linear-gradient(#f0f0f0 12px, #d8e4f0 14px, #c4c4e4);
}
.toolbox-side button {
  margin-top: 2px;
}
.toolbox-side span {
  writing-mode: vertical-rl;
  transform: rotate(180deg);
  font-size: 10px;
}
.toolbox-main {
  flex: 1;
  min-width: 0;
  padding-right: 3px;
}
.history-box {
  height: 186px;
  display: flex;
  align-items: flex-start;
  overflow: hidden;
  background: #fff;
  border-left: 1px solid #999;
  border-bottom: 2px solid #111;
}
.history {
  flex: 1;
  width: 100%;
  min-width: 0;
}
.h-time { width: 160px; }
.h-ticket { width: 81px; }
.h-type { width: 70px; }
.h-wide { width: 116px; }
.h-symbol { width: 93px; }
.h-close { width: 140px; }
.history th {
  height: 17px;
  padding: 0 5px;
  text-align: right;
  border-right: 1px solid #e2e2e2;
  border-bottom: 1px solid #d8d8d8;
}
.history th:first-child {
  text-align: left;
}
.history td {
  height: 20px;
  padding: 0 3px;
  text-align: right;
  white-space: nowrap;
  border-right: 1px solid #c4c4c4;
  border-bottom: 1px solid #c4c4c4;
}
.history td:first-child {
  text-align: left;
  padding-left: 2px;
}
.history .comment {
  text-align: left;
}
.balance .comment {
  border-right: none;
}
.history tr:nth-child(even) td {
  background: #ebebeb;
}
.history td svg {
  display: inline-block;
  width: 12px;
  height: 16px;
  margin: -2px 7px -2px 0;
  vertical-align: middle;
}
.sort {
  display: inline-block;
  margin-left: 14px;
  vertical-align: middle;
}
.buy {
  color: #2f86c4;
}
.sell {
  color: #d8603c;
}
.toolbox-tabs {
  padding-left: 3px;
}
.toolbox-tabs sub {
  color: #e0304a;
  font-size: 6px;
  font-weight: bold;
  align-self: flex-end;
  padding-left: 2px;
}
.tester {
  margin-left: auto;
  padding: 3px 11px 0 0;
  color: #111;
  text-decoration: none;
}

/* status bar */
.status {
  height: 23px;
  padding-top: 3px;
  display: flex;
  align-items: center;
}
.help {
  flex: 1;
  padding-left: 2px;
}
.cell {
  width: 55px;
  height: 17px;
  display: flex;
  align-items: center;
  gap: 4px;
  padding-left: 5px;
  border-left: 1px solid #999;
}
.cell.profile {
  width: 94px;
}
.cell.wide {
  width: 80px;
}
.cell.traffic {
  width: 90px;
}

/* taskbar */
.taskbar {
  height: 40px;
  margin-top: 7px;
  display: flex;
  align-items: stretch;
  border-top: 2px solid #0f4a68;
}
.taskbar > button {
  width: 62px;
}
.taskbar > .start {
  width: 49px;
}
.taskbar > .active {
  width: 59px;
  margin-left: 1px;
  background: linear-gradient(#a4def4, #86d2f0);
  border: 1px solid #1f5a7c;
  border-width: 0 1px;
}
.tray {
  margin-left: auto;
  display: flex;
  align-items: center;
  gap: 8px;
  padding-right: 16px;
  font-size: 11px;
}
.lang {
  margin: 0 8px 0 4px;
}
.clock {
  text-align: center;
  line-height: 17px;
}

/* translucent badges and arrows over the desktop */
.overlay {
  position: absolute;
  left: -1px;
  top: -1px;
  width: 100vw;
  height: 100vh;
  pointer-events: none;
}
```
